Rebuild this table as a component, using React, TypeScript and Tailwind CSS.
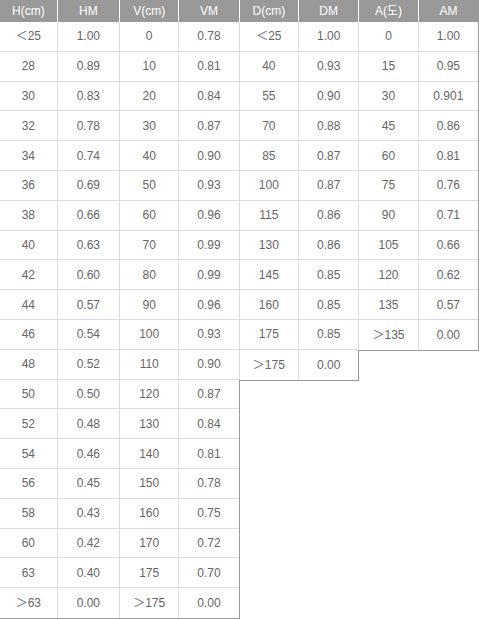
const tables: { head: [string, string]; rows: [string, string][] }[] = [
  {
    head: ['H(cm)', 'HM'],
    rows: [
      ['＜25', '1.00'], ['28', '0.89'], ['30', '0.83'], ['32', '0.78'], ['34', '0.74'],
      ['36', '0.69'], ['38', '0.66'], ['40', '0.63'], ['42', '0.60'], ['44', '0.57'],
      ['46', '0.54'], ['48', '0.52'], ['50', '0.50'], ['52', '0.48'], ['54', '0.46'],
      ['56', '0.45'], ['58', '0.43'], ['60', '0.42'], ['63', '0.40'], ['＞63', '0.00'],
    ],
  },
  {
    head: ['V(cm)', 'VM'],
    rows: [
      ['0', '0.78'], ['10', '0.81'], ['20', '0.84'], ['30', '0.87'], ['40', '0.90'],
      ['50', '0.93'], ['60', '0.96'], ['70', '0.99'], ['80', '0.99'], ['90', '0.96'],
      ['100', '0.93'], ['110', '0.90'], ['120', '0.87'], ['130', '0.84'], ['140', '0.81'],
      ['150', '0.78'], ['160', '0.75'], ['170', '0.72'], ['175', '0.70'], ['＞175', '0.00'],
    ],
  },
  {
    head: ['D(cm)', 'DM'],
    rows: [
      ['＜25', '1.00'], ['40', '0.93'], ['55', '0.90'], ['70', '0.88'], ['85', '0.87'],
      ['100', '0.87'], ['115', '0.86'], ['130', '0.86'], ['145', '0.85'], ['160', '0.85'],
      ['175', '0.85'], ['＞175', '0.00'],
    ],
  },
  {
    head: ['A(도)', 'AM'],
    rows: [
      ['0', '1.00'], ['15', '0.95'], ['30', '0.901'], ['45', '0.86'], ['60', '0.81'],
      ['75', '0.76'], ['90', '0.71'], ['105', '0.66'], ['120', '0.62'], ['135', '0.57'],
      ['＞135', '0.00'],
    ],
  },
]

export default function App() {
  return (
    <div className="w-[479px] bg-white flex items-start font-['Liberation_Sans','Noto_Sans_CJK_KR',sans-serif] text-[12px]">
      {tables.map((t, ti) => {
        const cols = ti === 0 ? 'grid grid-cols-[48.5%_1fr]' : 'grid grid-cols-[50.5%_1fr]'
        return (
          <div
            key={ti}
            className={
              ti === 0
                ? 'w-[120px] border-r border-b border-[#9a9a9a]'
                : 'w-[120.7px] -ml-px border-r border-b border-[#9a9a9a]'
            }
          >
            {/* header */}
            <div className={cols + ' h-[22px] bg-[#999999] text-white'}>
              <div className={ti === 0 ? 'flex items-center justify-center border-r border-white' : 'flex items-center justify-center border-l border-r border-white'}>
                {t.head[0]}
              </div>
              <div className="flex items-center justify-center">{t.head[1]}</div>
            </div>

            {/* rows */}
            {t.rows.map((r, ri) => (
              <div
                key={ri}
                className={
                  ri === t.rows.length - 1
                    ? cols + ' h-[29.8px] text-[#666666]'
                    : cols + ' h-[29.8px] text-[#666666] border-b border-[#dadada]'
                }
              >
                <div className={ti === 0 ? 'flex items-center justify-center border-r border-[#dadada]' : 'flex items-center justify-center border-l border-r border-[#dadada]'}>
                  {r[0]}
                </div>
                <div className="flex items-center justify-center">{r[1]}</div>
              </div>
            ))}
          </div>
        )
      })}
    </div>
  )
}
